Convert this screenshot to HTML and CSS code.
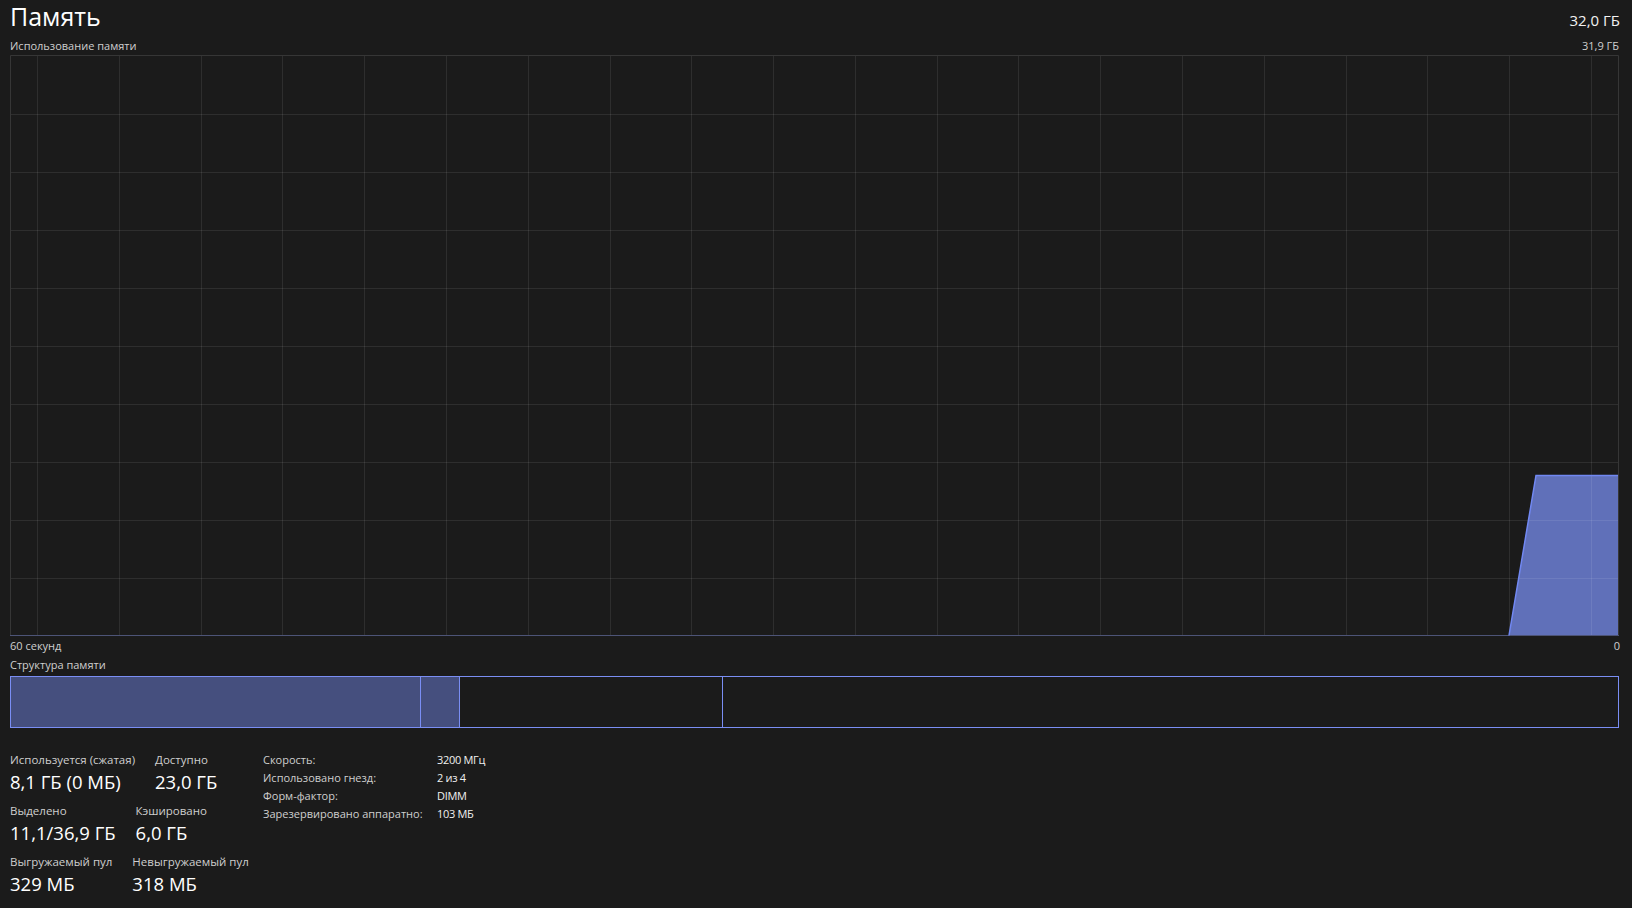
FILE: index.html
```html
<!DOCTYPE html>
<html lang="ru">
<head>
<meta charset="utf-8">
<title>Память</title>
<link rel="stylesheet" href="styles.css">
</head>
<body>
<div class="page">
  <div class="head">
    <div class="title">Память</div>
    <div class="total">32,0 ГБ</div>
  </div>
  <div class="sub">
    <div class="cap">Использование памяти</div>
    <div class="cap">31,9 ГБ</div>
  </div>
  <svg class="graph" width="1609" height="581" viewBox="0 0 1609 581">
    <polygon class="fill" points="1499,580 1526,420 1608,420 1608,580"/>
    <g class="grid">
      <line x1="0" y1="59.5" x2="1609" y2="59.5"/>
      <line x1="0" y1="117.5" x2="1609" y2="117.5"/>
      <line x1="0" y1="175.5" x2="1609" y2="175.5"/>
      <line x1="0" y1="233.5" x2="1609" y2="233.5"/>
      <line x1="0" y1="291.5" x2="1609" y2="291.5"/>
      <line x1="0" y1="349.5" x2="1609" y2="349.5"/>
      <line x1="0" y1="407.5" x2="1609" y2="407.5"/>
      <line x1="0" y1="465.5" x2="1609" y2="465.5"/>
      <line x1="0" y1="523.5" x2="1609" y2="523.5"/>
      <line x1="27.5" y1="0" x2="27.5" y2="581"/>
      <line x1="109.5" y1="0" x2="109.5" y2="581"/>
      <line x1="191.5" y1="0" x2="191.5" y2="581"/>
      <line x1="272.5" y1="0" x2="272.5" y2="581"/>
      <line x1="354.5" y1="0" x2="354.5" y2="581"/>
      <line x1="436.5" y1="0" x2="436.5" y2="581"/>
      <line x1="518.5" y1="0" x2="518.5" y2="581"/>
      <line x1="600.5" y1="0" x2="600.5" y2="581"/>
      <line x1="681.5" y1="0" x2="681.5" y2="581"/>
      <line x1="763.5" y1="0" x2="763.5" y2="581"/>
      <line x1="845.5" y1="0" x2="845.5" y2="581"/>
      <line x1="927.5" y1="0" x2="927.5" y2="581"/>
      <line x1="1008.5" y1="0" x2="1008.5" y2="581"/>
      <line x1="1090.5" y1="0" x2="1090.5" y2="581"/>
      <line x1="1172.5" y1="0" x2="1172.5" y2="581"/>
      <line x1="1254.5" y1="0" x2="1254.5" y2="581"/>
      <line x1="1336.5" y1="0" x2="1336.5" y2="581"/>
      <line x1="1417.5" y1="0" x2="1417.5" y2="581"/>
      <line x1="1499.5" y1="0" x2="1499.5" y2="581"/>
      <line x1="1581.5" y1="0" x2="1581.5" y2="581"/>
    </g>
    <path class="frame" d="M0.5 581 V0.5 H1608.5 V581"/>
    <line class="base" x1="0" y1="580.5" x2="1500" y2="580.5"/>
    <polyline class="line" points="1499,580.5 1526,420.5 1608,420.5"/>
    <line class="base" x1="1500" y1="580.5" x2="1609" y2="580.5"/>
  </svg>
  <div class="axis">
    <div class="cap">60 секунд</div>
    <div class="cap">0</div>
  </div>
  <div class="cap struct-title">Структура памяти</div>
  <div class="struct">
    <div class="seg used" style="width:409px"></div>
    <div class="seg used" style="width:38px"></div>
    <div class="seg" style="width:262px"></div>
    <div class="seg rest"></div>
  </div>
  <div class="stats">
    <div class="left">
      <div class="row">
        <div class="item"><div class="lbl">Используется (сжатая)</div><div class="val">8,1 ГБ (0 МБ)</div></div>
        <div class="item"><div class="lbl">Доступно</div><div class="val">23,0 ГБ</div></div>
      </div>
      <div class="row">
        <div class="item"><div class="lbl">Выделено</div><div class="val">11,1/36,9 ГБ</div></div>
        <div class="item"><div class="lbl">Кэшировано</div><div class="val">6,0 ГБ</div></div>
      </div>
      <div class="row">
        <div class="item"><div class="lbl">Выгружаемый пул</div><div class="val">329 МБ</div></div>
        <div class="item"><div class="lbl">Невыгружаемый пул</div><div class="val">318 МБ</div></div>
      </div>
    </div>
    <div class="specs">
      <div class="k">Скорость:</div><div class="v">3200 МГц</div>
      <div class="k">Использовано гнезд:</div><div class="v">2 из 4</div>
      <div class="k">Форм-фактор:</div><div class="v">DIMM</div>
      <div class="k">Зарезервировано аппаратно:</div><div class="v">103 МБ</div>
    </div>
  </div>
</div>
</body>
</html>
```
FILE: styles.css
```css
html, body {
  margin: 0;
  padding: 0;
  background: #1b1b1b;
}
body {
  font-family: "Open Sans", "Noto Sans", "DejaVu Sans", sans-serif;
  color: #ffffff;
  width: 1632px;
  height: 908px;
  overflow: hidden;
}
.page {
  padding: 1px 13px 0 10px;
}
.head {
  display: flex;
  justify-content: space-between;
  align-items: baseline;
  height: 30px;
}
.title {
  font-size: 25px;
  line-height: 30px;
  color: #ffffff;
}
.total {
  font-size: 15px;
  line-height: 30px;
  color: #f2f2f2;
  margin-right: -1px;
}
.cap {
  font-size: 11px;
  line-height: 15px;
  color: #cfcfcf;
  white-space: nowrap;
}
.lbl {
  font-size: 11.5px;
  line-height: 15px;
  color: #cfcfcf;
  white-space: nowrap;
}
.sub {
  display: flex;
  justify-content: space-between;
  margin-top: 7px;
}
.graph {
  display: block;
  margin-top: 2px;
}
.graph .fill {
  fill: #6070b9;
}
.graph .grid line {
  stroke: rgba(255, 255, 255, 0.085);
  stroke-width: 1;
}
.graph .frame {
  fill: none;
  stroke: #363636;
  stroke-width: 1;
}
.graph .base {
  stroke: #4d5477;
  stroke-width: 1;
}
.graph .line {
  fill: none;
  stroke: #7188f2;
  stroke-width: 1.5;
}
.axis {
  display: flex;
  justify-content: space-between;
  margin-top: 2px;
}
.axis .cap:last-child {
  margin-right: -1px;
}
.struct-title {
  margin-top: 4px;
}
.struct {
  display: flex;
  margin-top: 4px;
  height: 50px;
  border: 1px solid #7a8ef4;
}
.seg {
  border-left: 1px solid #7a8ef4;
  flex: none;
}
.seg:first-child {
  border-left: none;
}
.seg.used {
  background: #454f7e;
}
.seg.rest {
  flex: 1;
}
.stats {
  display: grid;
  grid-template-columns: 253px auto;
  margin-top: 23px;
}
.left {
  display: flex;
  flex-direction: column;
  gap: 10px;
  padding-top: 1px;
}
.row {
  display: flex;
  gap: 20px;
}
.item {
  display: flex;
  flex-direction: column;
}
.val {
  font-size: 18.5px;
  line-height: 22px;
  margin-top: 4px;
  color: #ffffff;
  white-space: nowrap;
}
.specs {
  display: grid;
  grid-template-columns: 174px auto;
  font-size: 11px;
  line-height: 18px;
  align-content: start;
}
.specs .k {
  color: #cfcfcf;
  white-space: nowrap;
}
.specs .v {
  color: #f0f0f0;
  white-space: nowrap;
  letter-spacing: -0.3px;
}
```
